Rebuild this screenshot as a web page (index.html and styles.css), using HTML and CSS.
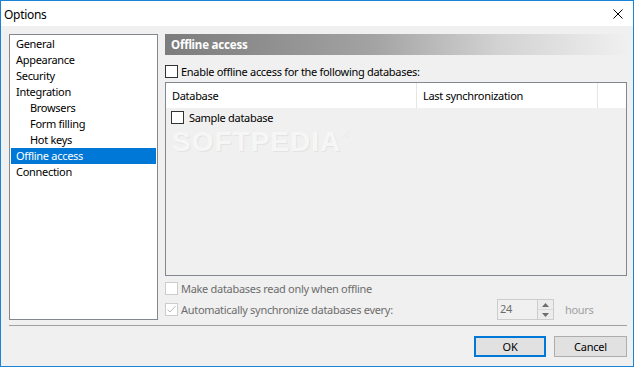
FILE: index.html
```html
<!DOCTYPE html>
<html>
<head>
<meta charset="utf-8">
<link rel="stylesheet" href="styles.css">
</head>
<body>
<div class="window">
  <div class="titlebar">
    <span class="title">Options</span>
    <svg class="close" width="10" height="10" viewBox="0 0 10 10"><path d="M0.5 0.5L9.5 9.5M9.5 0.5L0.5 9.5" stroke="#000" stroke-width="1"/></svg>
  </div>
  <div class="content">
    <div class="main">
      <ul class="tree">
        <li class="item">General</li>
        <li class="item">Appearance</li>
        <li class="item">Security</li>
        <li class="item">Integration</li>
        <li class="item child">Browsers</li>
        <li class="item child">Form filling</li>
        <li class="item child">Hot keys</li>
        <li class="item selected">Offline access</li>
        <li class="item">Connection</li>
      </ul>
      <div class="panel">
        <div class="panel-header">Offline access</div>
        <div class="check-row enable"><span class="box"></span><span class="label">Enable offline access for the following databases:</span></div>
        <div class="table">
          <div class="thead">
            <div class="th col1">Database</div>
            <div class="th col2">Last synchronization</div>
            <div class="th col3"></div>
          </div>
          <div class="tbody">
            <div class="row"><span class="box"></span><span class="label">Sample database</span></div>
            <div class="watermark">SOFTPEDIA<sup>®</sup></div>
          </div>
        </div>
        <div class="check-row readonly disabled"><span class="box"></span><span class="label">Make databases read only when offline</span></div>
        <div class="sync-row disabled">
          <div class="sync-label">
            <span class="box checked"><svg width="11" height="11" viewBox="0 0 11 11"><path d="M1.5 5.5L4 8L9.5 2" fill="none" stroke="#b9b9b9" stroke-width="1"/></svg></span>
            <span class="label">Automatically synchronize databases every:</span>
          </div>
          <div class="spin">
            <span class="spin-value">24</span>
            <span class="spin-buttons">
              <span class="spin-btn up"><svg width="7" height="4" viewBox="0 0 7 4"><path d="M0 4L3.5 0L7 4Z" fill="#6d6d6d"/></svg></span>
              <span class="spin-btn down"><svg width="7" height="4" viewBox="0 0 7 4"><path d="M0 0L3.5 4L7 0Z" fill="#6d6d6d"/></svg></span>
            </span>
          </div>
          <span class="hours">hours</span>
        </div>
      </div>
    </div>
    <div class="separator"></div>
    <div class="buttons">
      <button class="btn default">OK</button>
      <button class="btn">Cancel</button>
    </div>
  </div>
</div>
</body>
</html>
```
FILE: styles.css
```css
* { box-sizing: border-box; }
html, body { margin: 0; padding: 0; }
body {
  font-family: "Noto Sans", "Open Sans", sans-serif;
  font-size: 11px;
  letter-spacing: -0.3px;
  color: #000;
  background: #fff;
}
.window {
  width: 634px;
  height: 367px;
  border: 1px solid #1883d7;
  display: flex;
  flex-direction: column;
  background: #f0f0f0;
}
.titlebar {
  height: 25px;
  background: #fff;
  display: flex;
  align-items: center;
  padding-left: 3px;
  padding-right: 10px;
}
.title { font-size: 12px; flex: 1; padding-top: 1px; }
.close { display: block; margin-top: 1px; }
.content {
  flex: 1;
  padding: 8px 6px 0 8px;
  display: flex;
  flex-direction: column;
}
.main { display: flex; height: 286px; }
.tree {
  list-style: none;
  margin: 0;
  padding: 1px;
  width: 149px;
  height: 286px;
  border: 1px solid #828790;
  background: #fff;
}
.item {
  height: 16px;
  line-height: 16px;
  padding-left: 5px;
  white-space: nowrap;
}
.item.child { padding-left: 19px; }
.item.selected { background: #0078d7; color: #fff; }
.panel {
  margin-left: 7px;
  flex: 1;
  display: flex;
  flex-direction: column;
}
.panel-header {
  height: 21px;
  line-height: 21px;
  padding-left: 6px;
  font-weight: bold;
  color: #fff;
  font-size: 11.5px;
  letter-spacing: -0.2px;
  background: linear-gradient(to right, #7c7c7c 0%, #a3a3a3 45%, #d2d2d2 72%, #f0f0f0 100%);
  margin-right: -1px;
}
.check-row {
  display: flex;
  align-items: center;
  height: 13px;
}
.enable { margin-top: 10px; }
.box {
  width: 13px;
  height: 13px;
  border: 1px solid #333;
  background: #fff;
  flex: none;
  display: flex;
  align-items: center;
  justify-content: center;
}
.label { margin-left: 3px; white-space: nowrap; }
.table {
  margin-top: 4px;
  height: 194px;
  border: 1px solid #828790;
  display: flex;
  flex-direction: column;
}
.thead { display: flex; height: 25px; background: #fff; flex: none; }
.th {
  line-height: 25px;
  border-right: 1px solid #e5e5e5;
  padding-left: 6px;
  white-space: nowrap;
}
.col1 { width: 251px; }
.col2 { width: 181px; }
.col3 { flex: 1; border-right: none; }
.tbody { flex: 1; background: #f0f0f0; position: relative; }
.row {
  display: flex;
  align-items: center;
  margin-top: 3px;
  margin-left: 5px;
  height: 13px;
  position: relative;
  z-index: 1;
}
.row .label { margin-left: 5px; line-height: 13px; }
.watermark {
  position: absolute;
  left: 6px;
  top: 22px;
  font-family: "Liberation Sans", sans-serif;
  font-weight: bold;
  font-size: 28px;
  line-height: 24px;
  letter-spacing: 1px;
  color: #f6f6f6;
  text-shadow: 1px 1px 1px rgba(0,0,0,0.06);
}
.watermark sup { font-size: 9px; line-height: 9px; vertical-align: top; }
.readonly { margin-top: 6px; }
.disabled .box { border-color: #cccccc; background: #fff; }
.disabled .label { color: #6d6d6d; }
.sync-row {
  margin-top: 4px;
  height: 21px;
  display: flex;
  align-items: center;
}
.sync-label { width: 332px; display: flex; align-items: center; }
.spin {
  width: 57px;
  height: 21px;
  border: 1px solid #cccccc;
  background: #f0f0f0;
  display: flex;
}
.spin-value { flex: 1; padding-left: 2px; line-height: 18px; color: #6d6d6d; }
.spin-buttons {
  width: 16px;
  display: flex;
  flex-direction: column;
  border-left: 1px solid #cccccc;
}
.spin-btn {
  flex: 1;
  display: flex;
  align-items: center;
  justify-content: center;
  background: #ececec;
}
.spin-btn.up { border-bottom: 1px solid #dadada; }
.hours { margin-left: 11px; color: #a0a0a0; }
.separator {
  margin-top: 5px;
  height: 1px;
  background: #a0a0a0;
}
.buttons {
  margin-top: 10px;
  display: flex;
  justify-content: flex-end;
  gap: 8px;
}
.btn {
  width: 73px;
  height: 21px;
  border: 1px solid #adadad;
  background: #e1e1e1;
  font-family: inherit;
  font-size: 11px;
  letter-spacing: -0.2px;
  color: #000;
  padding: 0;
  margin: 0;
}
.btn.default { width: 72px; border: 2px solid #0078d7; }
```
